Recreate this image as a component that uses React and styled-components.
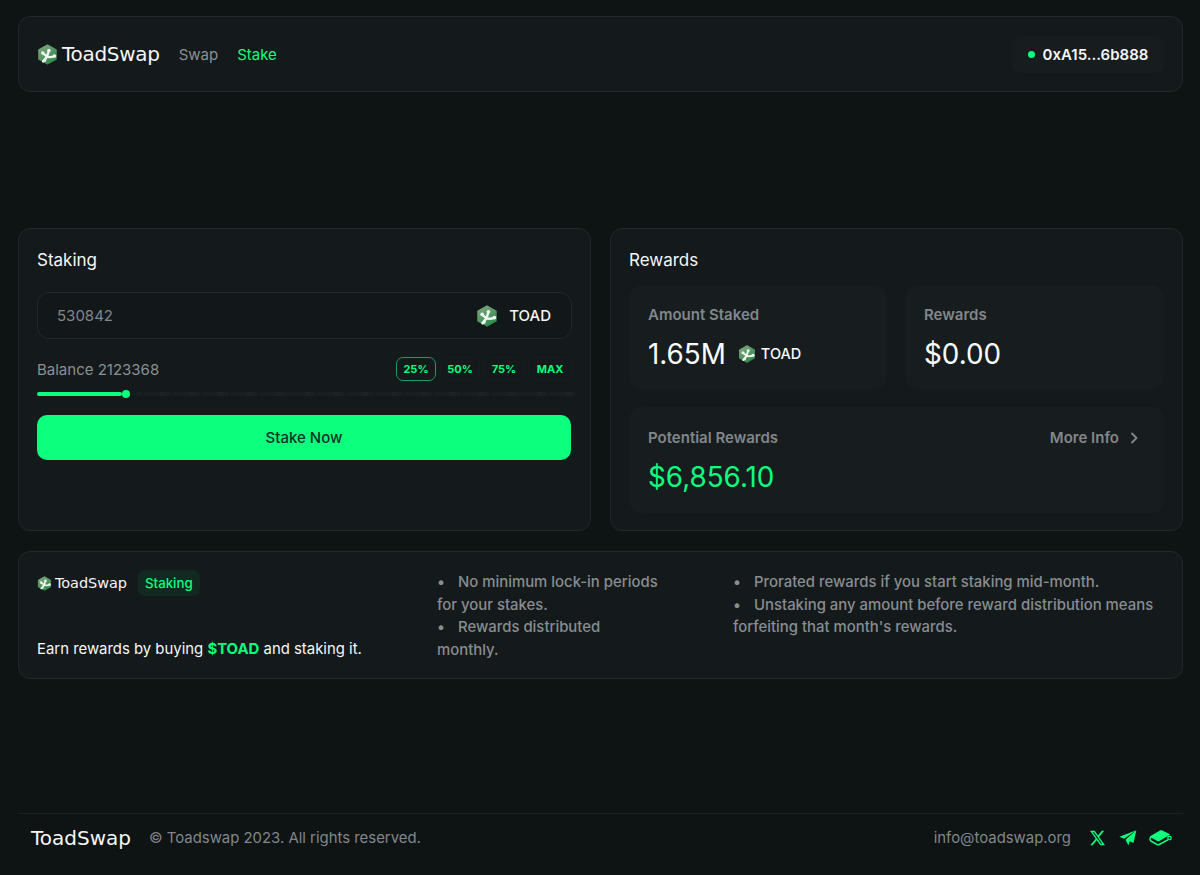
import React from 'react';
import styled, { createGlobalStyle } from 'styled-components';

const Global = createGlobalStyle`
  html, body { margin: 0; padding: 0; background: #0e1314; }
  body { font-family: Inter, "Liberation Sans", sans-serif; color: #fff; }
  * { box-sizing: border-box; }
`;

const Page = styled.div`
  width: 1200px;
  height: 875px;
  padding: 16px 17px 0 18px;
  display: flex;
  flex-direction: column;
  overflow: hidden;
`;

const Card = styled.div`
  background: #14191b;
  border: 1px solid #22292b;
  border-radius: 12px;
`;

const Header = styled(Card)`
  height: 76px;
  margin-bottom: 136px;
  padding: 0 18px;
  display: flex;
  align-items: center;
  justify-content: space-between;
`;

const Left = styled.div`
  display: flex;
  align-items: center;
`;

const LogoRow = styled.div`
  display: flex;
  align-items: center;
  gap: ${p => p.$gap}px;
`;

const Wordmark = styled.span`
  font-family: "DejaVu Sans", "Open Sans", sans-serif;
  font-weight: 400;
  font-size: ${p => p.$size}px;
  letter-spacing: ${p => p.$ls}px;
  line-height: 1;
  color: #f4f6f5;
`;

const NavLink = styled.a`
  font-size: 15px;
  margin-left: 19px;
  color: ${p => (p.$active ? '#0dff7e' : '#8a9094')};
`;

const Wallet = styled.div`
  height: 37px;
  width: 152px;
  background: #171c1f;
  border-radius: 8px;
  display: flex;
  align-items: center;
  justify-content: center;
  gap: 8px;
  font-size: 15px;
  font-weight: 600;
  color: #f4f6f5;
`;

const Dot = styled.span`
  width: 7px;
  height: 7px;
  border-radius: 50%;
  background: #0dff7e;
`;

const Columns = styled.div`
  display: grid;
  grid-template-columns: 573px 573px;
  gap: 19px;
  margin-bottom: 20px;
`;

const Panel = styled(Card)`
  height: 303px;
  padding: 19px 18px;
`;

const PanelTitle = styled.h2`
  margin: 0 0 ${p => p.$mb}px;
  font-size: 17px;
  font-weight: 400;
  line-height: 24px;
  color: #f6f7f7;
`;

const InputBox = styled.div`
  height: 47px;
  width: 535px;
  border: 1px solid #22292b;
  border-radius: 12px;
  background: #121719;
  padding: 0 20px 0 19px;
  display: flex;
  align-items: center;
  justify-content: space-between;
`;

const InputValue = styled.span`
  font-size: 15px;
  color: #81878b;
`;

const TokenLabel = styled.div`
  display: flex;
  align-items: center;
  gap: 11px;
  font-size: 15px;
  font-weight: 500;
  color: #f6f7f7;
`;

const BalanceRow = styled.div`
  margin-top: 16px;
  width: 535px;
  height: 28px;
  display: flex;
  align-items: center;
  justify-content: space-between;
`;

const Balance = styled.span`
  font-size: 15px;
  color: #8a9094;
`;

const Chips = styled.div`
  display: flex;
  gap: 4px;
`;

const Chip = styled.button`
  width: ${p => p.$w || 40}px;
  height: 24px;
  padding: 0;
  border-radius: 7px;
  background: transparent;
  border: 1px solid ${p => (p.$active ? '#1f9a5e' : '#171e1f')};
  color: #0dff7e;
  font: 700 11px Inter, sans-serif;
`;

const Slider = styled.div`
  margin-top: 6px;
  width: 538px;
  height: 10px;
  display: flex;
  align-items: center;
`;

const Fill = styled.div`
  width: 85px;
  height: 4px;
  border-radius: 2px;
  background: #0dff7e;
`;

const Knob = styled.div`
  width: 8px;
  height: 8px;
  border-radius: 50%;
  background: #0dff7e;
  margin-right: 6px;
`;

const Track = styled.div`
  flex: 1;
  height: 4px;
  background: repeating-linear-gradient(90deg, #1a2022 0 5px, #161c1e 5px 8px, #191f21 8px 24px, #1c2325 24px 29px);
  border-radius: 2px;
`;

const Primary = styled.button`
  display: block;
  margin-top: 16px;
  width: 534px;
  height: 45px;
  border: 0;
  border-radius: 10px;
  background: #0dff7e;
  color: #12302a;
  font: 500 15px Inter, sans-serif;
`;

const StatGrid = styled.div`
  display: grid;
  grid-template-columns: 258px 259px;
  grid-template-rows: 104px 106px;
  gap: 18px;
`;

const Stat = styled.div`
  grid-column: ${p => (p.$wide ? '1 / 3' : 'auto')};
  background: #171c1f;
  border-radius: 12px;
  padding: ${p => (p.$wide ? 21 : 20)}px 19px;
`;

const StatHead = styled.div`
  display: flex;
  justify-content: space-between;
  align-items: center;
  font-size: 15px;
  font-weight: 600;
  line-height: 20px;
  color: #81878b;
`;

const More = styled.span`
  display: flex;
  align-items: center;
  gap: 9px;
  padding-right: 5px;
`;

const StatValue = styled.div`
  margin-top: 11px;
  display: flex;
  align-items: center;
  font-size: 27.8px;
  line-height: 36px;
  color: ${p => (p.$green ? '#0dff7e' : '#fbfcfc')};
`;

const StatUnit = styled.span`
  display: flex;
  align-items: center;
  gap: 5px;
  margin-left: 12px;
  font-size: 14.5px;
  font-weight: 500;
`;

const Info = styled(Card)`
  height: 128px;
  margin-bottom: 134px;
  padding: 18px;
  display: grid;
  grid-template-columns: 400px 296px 1fr;
`;

const InfoLeft = styled.div`
  display: flex;
  flex-direction: column;
`;

const Badge = styled.span`
  margin-left: 8px;
  padding: 0 7px;
  height: 26px;
  display: inline-flex;
  align-items: center;
  border-radius: 7px;
  background: #11291f;
  color: #0dff7e;
  font-size: 13.3px;
  font-weight: 500;
`;

const Tagline = styled.p`
  margin: 42px 0 0;
  font-size: 14.9px;
  line-height: 22px;
  color: #f6f7f7;
  b { color: #0dff7e; font-weight: 700; }
`;

const Bullets = styled.div`
  margin-top: 1px;
  font-size: 14.9px;
  font-weight: 500;
  line-height: 22.5px;
  color: #878d91;
  width: ${p => p.$w}px;
`;

const Bullet = styled.div`
  &::before {
    content: '•';
    display: inline-block;
    width: 21px;
  }
`;

const Footer = styled.footer`
  border-top: 1px solid #1c2224;
  height: 48px;
  padding: 0 11px 0 13px;
  display: flex;
  align-items: center;
  justify-content: space-between;
`;

const FootText = styled.span`
  font-size: 14.9px;
  color: #81878b;
  margin-left: ${p => p.$ml || 0}px;
`;

const Socials = styled.div`
  display: flex;
  align-items: center;
`;

const SocialIcon = styled.svg`
  margin-left: ${p => p.$ml}px;
  display: block;
`;

const Frog = ({ size, id }) => (
  <svg width={size} height={size} viewBox="0 0 24 24">
    <defs>
      <linearGradient id={id} x1="0.2" y1="0" x2="0.8" y2="1">
        <stop offset="0" stopColor="#7aa67c" />
        <stop offset="1" stopColor="#2c8747" />
      </linearGradient>
    </defs>
    <path d="M12 1.200 L21.800 6.600 V17.400 L12 22.800 L2.200 17.400 V6.600 Z" fill={`url(#${id})`} stroke={`url(#${id})`} strokeWidth="1.600" strokeLinejoin="round" />
    <path d="M7 20 C8.500 17.500 10 16 11.500 14.500 L7 10.700 M11.500 14.500 L13.400 8 M11.500 14.500 C14 15.200 17 15 20 14" fill="none" stroke="#f2f7f2" strokeWidth="2.600" strokeLinecap="round" strokeLinejoin="round" />
    <path d="M5.500 19.500 L10 20.500 L11.500 15 Z" fill="#f2f7f2" />
    <circle cx="6.600" cy="10.300" r="2" fill="#f2f7f2" />
    <circle cx="13.600" cy="7.400" r="2" fill="#f2f7f2" />
    <circle cx="20" cy="13.700" r="2" fill="#f2f7f2" />
  </svg>
);

export default function App() {
  return (
    <>
      <Global />
      <Page>
        <Header>
          <Left>
            <LogoRow $gap={4}>
              <Frog size={21} id="f1" />
              <Wordmark $size={20} $ls={-0.3}>ToadSwap</Wordmark>
            </LogoRow>
            <NavLink>Swap</NavLink>
            <NavLink $active>Stake</NavLink>
          </Left>
          <Wallet><Dot />0xA15...6b888</Wallet>
        </Header>

        <Columns>
          <Panel>
            <PanelTitle $mb={20}>Staking</PanelTitle>
            <InputBox>
              <InputValue>530842</InputValue>
              <TokenLabel><Frog size={22} id="f2" />TOAD</TokenLabel>
            </InputBox>
            <BalanceRow>
              <Balance>Balance 2123368</Balance>
              <Chips>
                <Chip $active>25%</Chip>
                <Chip>50%</Chip>
                <Chip>75%</Chip>
                <Chip $w={44}>MAX</Chip>
              </Chips>
            </BalanceRow>
            <Slider><Fill /><Knob /><Track /></Slider>
            <Primary>Stake Now</Primary>
          </Panel>

          <Panel>
            <PanelTitle $mb={13}>Rewards</PanelTitle>
            <StatGrid>
              <Stat>
                <StatHead>Amount Staked</StatHead>
                <StatValue>1.65M<StatUnit><Frog size={18} id="f3" />TOAD</StatUnit></StatValue>
              </Stat>
              <Stat>
                <StatHead>Rewards</StatHead>
                <StatValue>$0.00</StatValue>
              </Stat>
              <Stat $wide>
                <StatHead>
                  Potential Rewards
                  <More>
                    More Info
                    <svg width="12" height="12" viewBox="0 0 12 12" fill="none" stroke="#81878b" strokeWidth="1.800" strokeLinecap="round" strokeLinejoin="round"><path d="M4 1.500 L8.500 6 L4 10.500" /></svg>
                  </More>
                </StatHead>
                <StatValue $green>$6,856.10</StatValue>
              </Stat>
            </StatGrid>
          </Panel>
        </Columns>

        <Info>
          <InfoLeft>
            <LogoRow $gap={3}>
              <Frog size={15} id="f4" />
              <Wordmark $size={14.5} $ls={-0.07}>ToadSwap</Wordmark>
              <Badge>Staking</Badge>
            </LogoRow>
            <Tagline>Earn rewards by buying <b>$TOAD</b> and staking it.</Tagline>
          </InfoLeft>
          <Bullets $w={228}>
            <Bullet>No minimum lock-in periods for your stakes.</Bullet>
            <Bullet>Rewards distributed monthly.</Bullet>
          </Bullets>
          <Bullets $w={430}>
            <Bullet>Prorated rewards if you start staking mid-month.</Bullet>
            <Bullet>Unstaking any amount before reward distribution means forfeiting that month's rewards.</Bullet>
          </Bullets>
        </Info>

        <Footer>
          <Left>
            <Wordmark $size={20} $ls={0}>ToadSwap</Wordmark>
            <FootText $ml={18}>© Toadswap 2023. All rights reserved.</FootText>
          </Left>
          <Socials>
            <FootText>info@toadswap.org</FootText>
            <SocialIcon $ml={19} width="15" height="16" viewBox="0 0 24 24" preserveAspectRatio="none" fill="#0dff7e"><path d="M18.900 1.200h3.700l-8 9.200L24 22.800h-7.400l-5.800-7.600-6.600 7.600H.5l8.600-9.800L0 1.200h7.600l5.200 6.900 6.100-6.900zm-1.300 19.400h2L6.500 3.300H4.300l13.300 17.300z" /></SocialIcon>
            <SocialIcon $ml={14} width="18" height="16" viewBox="0 0 24 22" fill="#0dff7e"><path d="M23.500.5 0 9.400l6.800 2.800L23.500.5zM23.500.5 8.500 13.500l4 7.500 2-5.500 5 2.500L23.500.5z" /></SocialIcon>
            <SocialIcon $ml={12} width="23" height="17" viewBox="0 0 46 34" fill="none"><path d="M3 14 22 3c1.500-.8 3-.8 4.500 0L41 10c1 .6 1 1.600 0 2.200L21 24c-1.500.8-3 .8-4.500 0L3 16.500c-1-.6-1-1.900 0-2.500z" fill="#0dff7e" /><path d="M3 17c-2 3-1 6 1.500 7.500L16 31c1.500.8 3 .8 4.500 0L37 22" stroke="#0dff7e" strokeWidth="3" strokeLinecap="round" /><circle cx="41" cy="18" r="3.500" stroke="#0dff7e" strokeWidth="2.500" /></SocialIcon>
          </Socials>
        </Footer>
      </Page>
    </>
  );
}
